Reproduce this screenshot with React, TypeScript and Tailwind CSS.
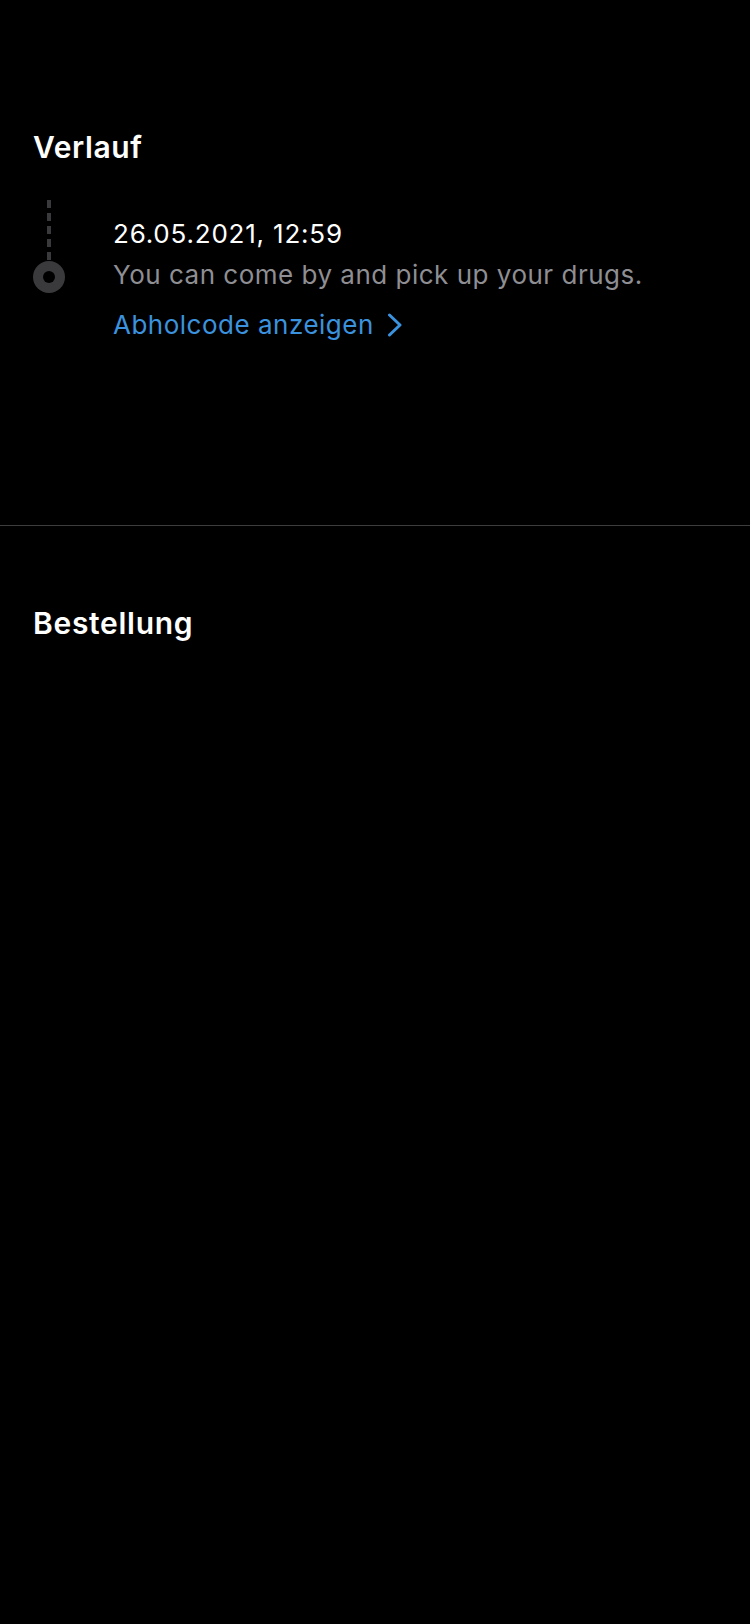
/* Order detail – history (dark) */

const font = { fontFamily: "Inter, 'Noto Sans', sans-serif" };

function TimelineMarker() {
  return (
    <div className="flex w-[32px] flex-col items-center">
      {/* dashed connector */}
      <div className="flex flex-col gap-[5px]">
        {[0, 1, 2, 3].map((i) => (
          <span key={i} className="block h-[8px] w-[4px] bg-[#3a3a3c]" />
        ))}
        <span className="block h-[8px] w-[4px] bg-[#3a3a3c]" />
      </div>
      {/* dot */}
      <div className="mt-[1px] flex h-[32px] w-[32px] items-center justify-center rounded-full bg-[#3a3a3c]">
        <span className="block h-[12px] w-[12px] rounded-full bg-black" />
      </div>
    </div>
  );
}

export default function App() {
  return (
    <div className="min-h-[1624px] w-[750px] bg-black text-white" style={font}>
      <section className="h-[525px] px-[33px] pt-[129px]">
        <h2 className="text-[30px] font-semibold leading-[36px] tracking-[0.6px]">
          Verlauf
        </h2>

        {/* history entry */}
        <div className="mt-[35px] flex gap-[48px]">
          <TimelineMarker />
          <div className="pt-[18px] text-[26px] leading-[32px] tracking-[0.5px]">
            <p className="tracking-[0.8px] text-white">26.05.2021, 12:59</p>
            <p className="mt-[9px] text-[#8e8e93]">You can come by and pick up your drugs.</p>
            <button className="mt-[18px] flex items-center gap-[13px] tracking-[0.5px] text-[#3b92de]">
              <span>Abholcode anzeigen</span>
              <svg width="16" height="24" viewBox="0 0 16 24" fill="none">
                <path
                  d="M2.5 2 L13 12 L2.5 22"
                  stroke="#3b92de"
                  strokeWidth="3"
                  strokeLinecap="round"
                  strokeLinejoin="round"
                />
              </svg>
            </button>
          </div>
        </div>
      </section>

      <div className="h-px w-full bg-[#3d3d3f]" />

      <section className="px-[33px] pt-[79px]">
        <h2 className="text-[30px] font-semibold leading-[36px] tracking-[0.7px]">
          Bestellung
        </h2>
      </section>
    </div>
  );
}
